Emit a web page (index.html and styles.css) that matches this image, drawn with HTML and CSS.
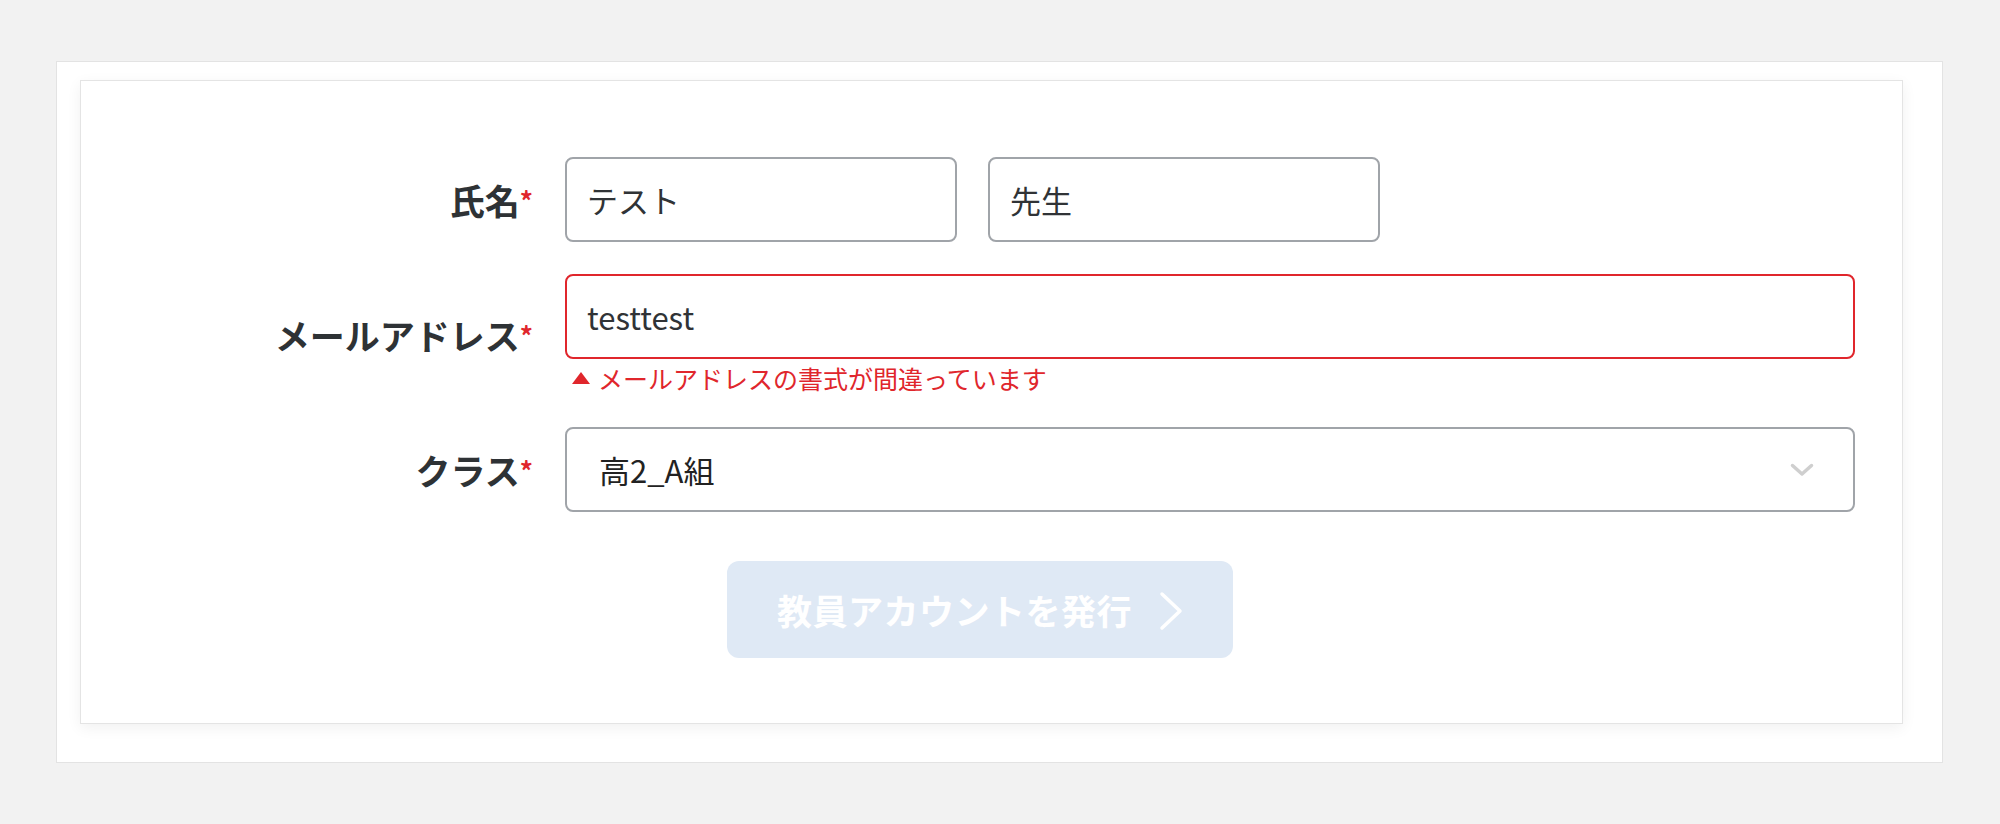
FILE: index.html
```html
<!DOCTYPE html>
<html lang="ja">
<head>
<meta charset="utf-8">
<title>教員アカウント発行</title>
<link rel="stylesheet" href="styles.css">
</head>
<body>
<div class="frame">
  <div class="card">
    <div class="form">
      <div class="label">氏名<span class="req">*</span></div>
      <div class="field name-field">
        <input class="input name" type="text" value="テスト">
        <input class="input name" type="text" value="先生">
      </div>

      <div class="label">メールアドレス<span class="req">*</span></div>
      <div class="field">
        <input class="input wide invalid" type="text" value="testtest">
        <div class="error">
          <svg class="err-icon" width="18" height="12" viewBox="0 0 18 12"><polygon points="9,0 18,12 0,12" fill="#e0262c"/></svg>
          <span>メールアドレスの書式が間違っています</span>
        </div>
      </div>

      <div class="label">クラス<span class="req">*</span></div>
      <div class="field">
        <div class="select-wrap">
          <select class="select">
            <option>高2_A組</option>
          </select>
          <svg class="select-chevron" width="24" height="14" viewBox="0 0 24 14"><path d="M2.5 2.5 L12 11 L21.5 2.5" fill="none" stroke="#cfcfcf" stroke-width="3.5" stroke-linecap="round" stroke-linejoin="round"/></svg>
        </div>
      </div>
    </div>

    <div class="actions">
      <button class="submit" type="button" disabled>
        <span class="submit-text">教員アカウントを発行</span>
        <svg class="submit-chevron" width="24" height="40" viewBox="0 0 24 40"><path d="M3 3 L21 20 L3 37" fill="none" stroke="#ffffff" stroke-width="3.5" stroke-linecap="round" stroke-linejoin="round"/></svg>
      </button>
    </div>
  </div>
</div>
</body>
</html>
```

FILE: styles.css
```css
* {
  box-sizing: border-box;
}

html, body {
  margin: 0;
  padding: 0;
}

body {
  background: #f2f2f2;
  font-family: "Noto Sans CJK JP", "Noto Sans", sans-serif;
  color: #303336;
  padding-top: 61px;
}

.frame {
  margin: 0 57px 0 56px;
  background: #ffffff;
  border: 1px solid #e3e3e3;
  padding: 18px 39px 38px 23px;
}

.card {
  background: #ffffff;
  border: 1px solid #e4e4e4;
  box-shadow: 0 4px 14px rgba(0, 0, 0, 0.06);
  padding: 76px 0 65px 0;
}

.form {
  display: grid;
  grid-template-columns: 452px 1290px;
  column-gap: 32px;
  row-gap: 32px;
  align-items: center;
}

.label {
  text-align: right;
  font-size: 35px;
  font-weight: 700;
  line-height: 1.4;
  color: #2e3235;
  white-space: nowrap;
}

.req {
  color: #e0262c;
  font-size: 26px;
  font-weight: 700;
  vertical-align: 4px;
}

.field {
  display: flex;
  flex-direction: column;
}

.name-field {
  flex-direction: row;
  gap: 31px;
}

.input {
  height: 85px;
  border: 2px solid #a0a4a9;
  border-radius: 8px;
  padding: 0 20px;
  font-family: "Noto Sans CJK JP", "Noto Sans", sans-serif;
  font-size: 31px;
  color: #303336;
  background: #ffffff;
  outline: none;
}

.input.name {
  width: 392px;
}

.input.wide {
  width: 1290px;
}

.input.invalid {
  border-color: #e0262c;
}

.error {
  display: flex;
  align-items: center;
  gap: 8px;
  margin-top: 2px;
  padding-left: 7px;
  color: #e0262c;
  font-size: 25px;
  line-height: 34px;
}

.err-icon {
  flex: none;
}

.select-wrap {
  position: relative;
  width: 1290px;
}

.select {
  width: 100%;
  height: 85px;
  border: 2px solid #a0a4a9;
  border-radius: 8px;
  padding: 0 32px;
  font-family: "Noto Sans CJK JP", "Noto Sans", sans-serif;
  font-size: 31px;
  color: #222222;
  background: #ffffff;
  appearance: none;
  -webkit-appearance: none;
  outline: none;
}

.select-chevron {
  position: absolute;
  right: 41px;
  top: 36px;
  pointer-events: none;
}

.actions {
  display: flex;
  justify-content: center;
  padding-right: 23px;
  margin-top: 49px;
}

.submit {
  width: 506px;
  height: 97px;
  border: none;
  border-radius: 12px;
  background: #dfe9f5;
  color: #ffffff;
  display: flex;
  align-items: center;
  justify-content: center;
  gap: 27px;
  font-family: "Noto Sans CJK JP", "Noto Sans", sans-serif;
  font-size: 35px;
  font-weight: 700;
  padding: 0;
  cursor: default;
}

.submit-text {
  line-height: 1;
  letter-spacing: 0.5px;
}

.submit-chevron {
  flex: none;
  margin-top: 2px;
}
```
